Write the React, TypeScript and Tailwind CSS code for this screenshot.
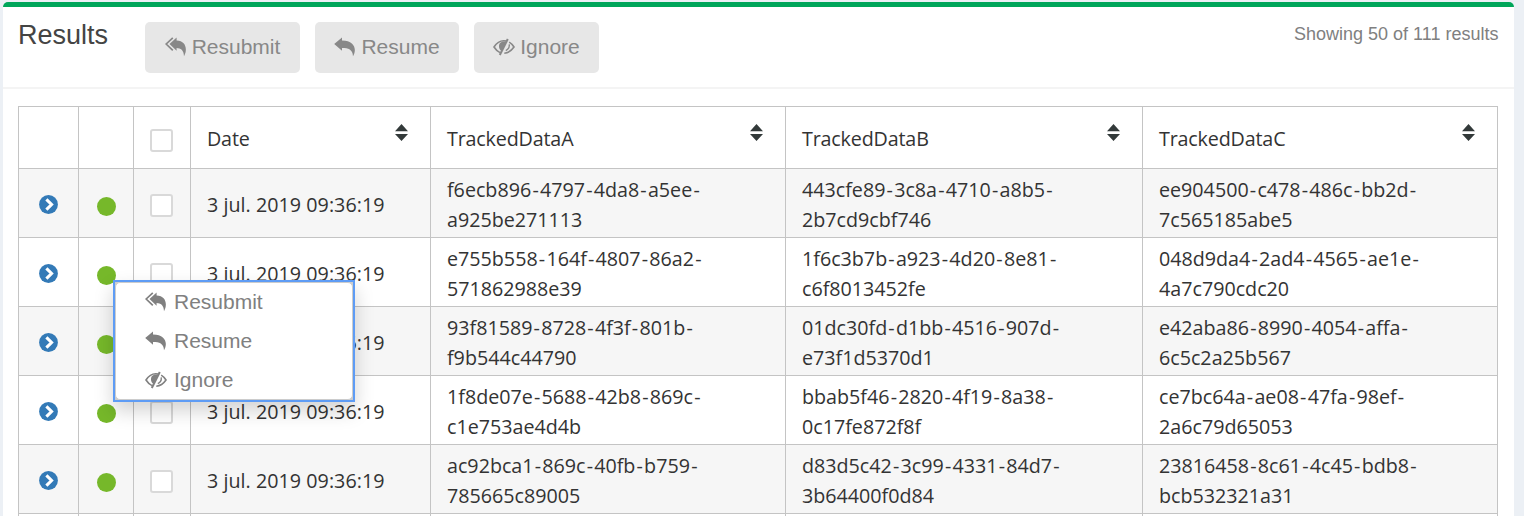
import React, { Fragment } from "react";

type IconProps = { className?: string };

function ResubmitIcon({ className }: IconProps) {
  return (
    <svg viewBox="0 0 22 20" className={className} fill="currentColor" aria-hidden="true">
      <path d="M11.6 .5 4.5 7 11.6 13.8V11C15.6 11.1 18.7 13 19 19.2C22.8 12.5 21 3.6 11.6 3.4Z" />
      <path d="M7.8 .9 1.2 7 7.8 13.3" fill="none" stroke="currentColor" strokeWidth="1.7" />
    </svg>
  );
}

function ResumeIcon({ className }: IconProps) {
  return (
    <svg viewBox="0 0 22 20" className={className} fill="currentColor" aria-hidden="true">
      <path d="M8 .4.2 7 8 13.8V11.1C14.5 11.1 18.6 12.6 19 19.2C23 12.5 21 3.6 8 3.4Z" />
    </svg>
  );
}

function IgnoreIcon({ className }: IconProps) {
  return (
    <svg viewBox="0 0 22 18" className={className} fill="none" stroke="currentColor" strokeWidth="1.6" aria-hidden="true">
      <path d="M7 14.6C4.5 13.4 2.4 11.2 1 9C4 4.3 8.5 1.9 13.3 3" />
      <path d="M16.2 4.1C18.2 5.3 19.8 7 21 9C18.6 12.5 15.5 14.9 11.3 15.2" />
      <path d="M14.8 1 6.8 17" strokeWidth="2" />
      <path d="M13 3.9C8.5 2.6 5.6 5.3 6 9C6.2 10.8 7.2 12.3 8.7 13Z" fill="currentColor" stroke="none" />
      <path d="M16.2 6.4C16.6 9 15.2 11.5 12.8 12.6" strokeWidth="1.4" />
    </svg>
  );
}

const actions = [
  { label: "Resubmit", Icon: ResubmitIcon, width: "w-[155px]" },
  { label: "Resume", Icon: ResumeIcon, width: "w-[144px]" },
  { label: "Ignore", Icon: IgnoreIcon, width: "w-[125px]" },
];

const headers = ["Date", "TrackedDataA", "TrackedDataB", "TrackedDataC"];

const rows = [
  [["f6ecb896-4797-4da8-a5ee-", "a925be271113"], ["443cfe89-3c8a-4710-a8b5-", "2b7cd9cbf746"], ["ee904500-c478-486c-bb2d-", "7c565185abe5"]],
  [["e755b558-164f-4807-86a2-", "571862988e39"], ["1f6c3b7b-a923-4d20-8e81-", "c6f8013452fe"], ["048d9da4-2ad4-4565-ae1e-", "4a7c790cdc20"]],
  [["93f81589-8728-4f3f-801b-", "f9b544c44790"], ["01dc30fd-d1bb-4516-907d-", "e73f1d5370d1"], ["e42aba86-8990-4054-affa-", "6c5c2a25b567"]],
  [["1f8de07e-5688-42b8-869c-", "c1e753ae4d4b"], ["bbab5f46-2820-4f19-8a38-", "0c17fe872f8f"], ["ce7bc64a-ae08-47fa-98ef-", "2a6c79d65053"]],
  [["ac92bca1-869c-40fb-b759-", "785665c89005"], ["d83d5c42-3c99-4331-84d7-", "3b64400f0d84"], ["23816458-8c61-4c45-bdb8-", "bcb532321a31"]],
];

const GRID = "grid grid-cols-[60px_55px_57px_240px_355px_357px_355px]";
const CELL = "border-r border-b border-[#c4c4c4]";

function Checkbox() {
  return <span className="block h-[23px] w-[23px] rounded-[3px] border-2 border-[#d9d9d9] bg-white" />;
}

function SortIcon() {
  return (
    <svg viewBox="0 0 13 17" className="h-[17px] w-[13px]" fill="#333a3a" aria-hidden="true">
      <path d="M6.5 0 13 7.3H0ZM6.5 17 0 9.9H13Z" />
    </svg>
  );
}

function ExpandIcon() {
  return (
    <svg viewBox="0 0 18 18" className="h-[19px] w-[19px]" aria-hidden="true">
      <circle cx="9" cy="9" r="8.9" fill="#337ab7" />
      <path d="M7 4.2 11.9 9 7 13.8" fill="none" stroke="white" strokeWidth="2.9" />
    </svg>
  );
}

/** One line of an identifier, with a little air around its hyphens. */
function IdLine({ text }: { text: string }) {
  return (
    <div className="whitespace-nowrap">
      {text.split("-").map((part, i) => (
        <Fragment key={i}>
          {i > 0 && <span className="px-[1.2px]">-</span>}
          {part}
        </Fragment>
      ))}
    </div>
  );
}

export default function App() {
  return (
    <div className="h-[516px] w-[1524px] overflow-hidden bg-[#ecf0f5] pt-[2px] pl-[3px] font-['Liberation_Sans',sans-serif]">
      <section className="h-[540px] w-[1511px] rounded-[5px] border-t-[5px] border-[#00a65a] bg-white">
        <header className="flex h-[82px] items-start border-b-2 border-[#f4f4f4] pt-[15px] pr-[15.5px] pl-[15px]">
          <h1 className="w-[127px] text-[27px] leading-[26px] text-[#444]">Results</h1>
          <div className="flex gap-[15px]">
            {actions.map(({ label, Icon, width }) => (
              <button key={label} className={`${width} flex h-[51px] items-center justify-center gap-[5px] rounded-[5px] bg-[#e7e7e7] pb-[2px] text-[21px] text-[#888]`}>
                <Icon className="h-5 w-[22px]" />
                <span>{label}</span>
              </button>
            ))}
          </div>
          <p className="ml-auto text-[18px] leading-6 text-[#808080]">Showing 50 of 111 results</p>
        </header>

        <div className="relative mt-[17px] ml-[15px] w-[1480px] border-t border-l border-[#c4c4c4] font-['Open_Sans',sans-serif] text-[19.7px] text-[#333]">
          <div className={`${GRID} h-[62px]`}>
            <div className={CELL} />
            <div className={CELL} />
            <div className={`${CELL} flex items-center pt-[6px] pl-4`}>
              <Checkbox />
            </div>
            {headers.map((header) => (
              <div key={header} className={`${CELL} flex justify-between pt-[17px] pr-[22.5px] pl-4`}>
                <span className="leading-[30px] tracking-[-0.16px]">{header}</span>
                <SortIcon />
              </div>
            ))}
          </div>

          {rows.map((cells, index) => (
            <div key={index} className={`${GRID} h-[69px] ${index % 2 === 0 ? "bg-[#f6f6f6]" : "bg-white"}`}>
              <div className={`${CELL} flex items-center pt-[3px] pl-5`}>
                <ExpandIcon />
              </div>
              <div className={`${CELL} flex items-center justify-center pt-[7px] pl-px`}>
                <span className="h-[19px] w-[19px] rounded-full bg-[#76b82a]" />
              </div>
              <div className={`${CELL} flex items-center pt-[5px] pl-4`}>
                <Checkbox />
              </div>
              <div className={`${CELL} flex items-center pt-1 pl-4 tracking-[0.04px]`}>3 jul. 2019 09:36:19</div>
              {cells.map((lines) => (
                <div key={lines[0]} className={`${CELL} pt-[6px] pl-4 leading-[30px]`}>
                  {lines.map((line) => (
                    <IdLine key={line} text={line} />
                  ))}
                </div>
              ))}
            </div>
          ))}
          <div className={`${GRID} h-[69px] bg-white`}>
            {[0, 1, 2, 3, 4, 5, 6].map((n) => (
              <div key={n} className={CELL} />
            ))}
          </div>

          <div className="absolute top-[173px] left-[94px] h-[122px] w-[242px] border-2 border-[#5e9cf5] bg-[#ccc] font-['Liberation_Sans',sans-serif] shadow-[0_9px_18px_rgba(0,0,0,0.175)]">
            <ul className="flex h-full flex-col rounded-[5px] border border-[#ccc] bg-white text-[21px] text-[#808080]">
              {actions.map(({ label, Icon }) => (
                <li key={label} className="flex h-[39px] shrink-0 items-center gap-[7px] pb-px pl-[29px]">
                  <Icon className="h-5 w-[22px]" />
                  <span>{label}</span>
                </li>
              ))}
            </ul>
          </div>
        </div>
      </section>
    </div>
  );
}
